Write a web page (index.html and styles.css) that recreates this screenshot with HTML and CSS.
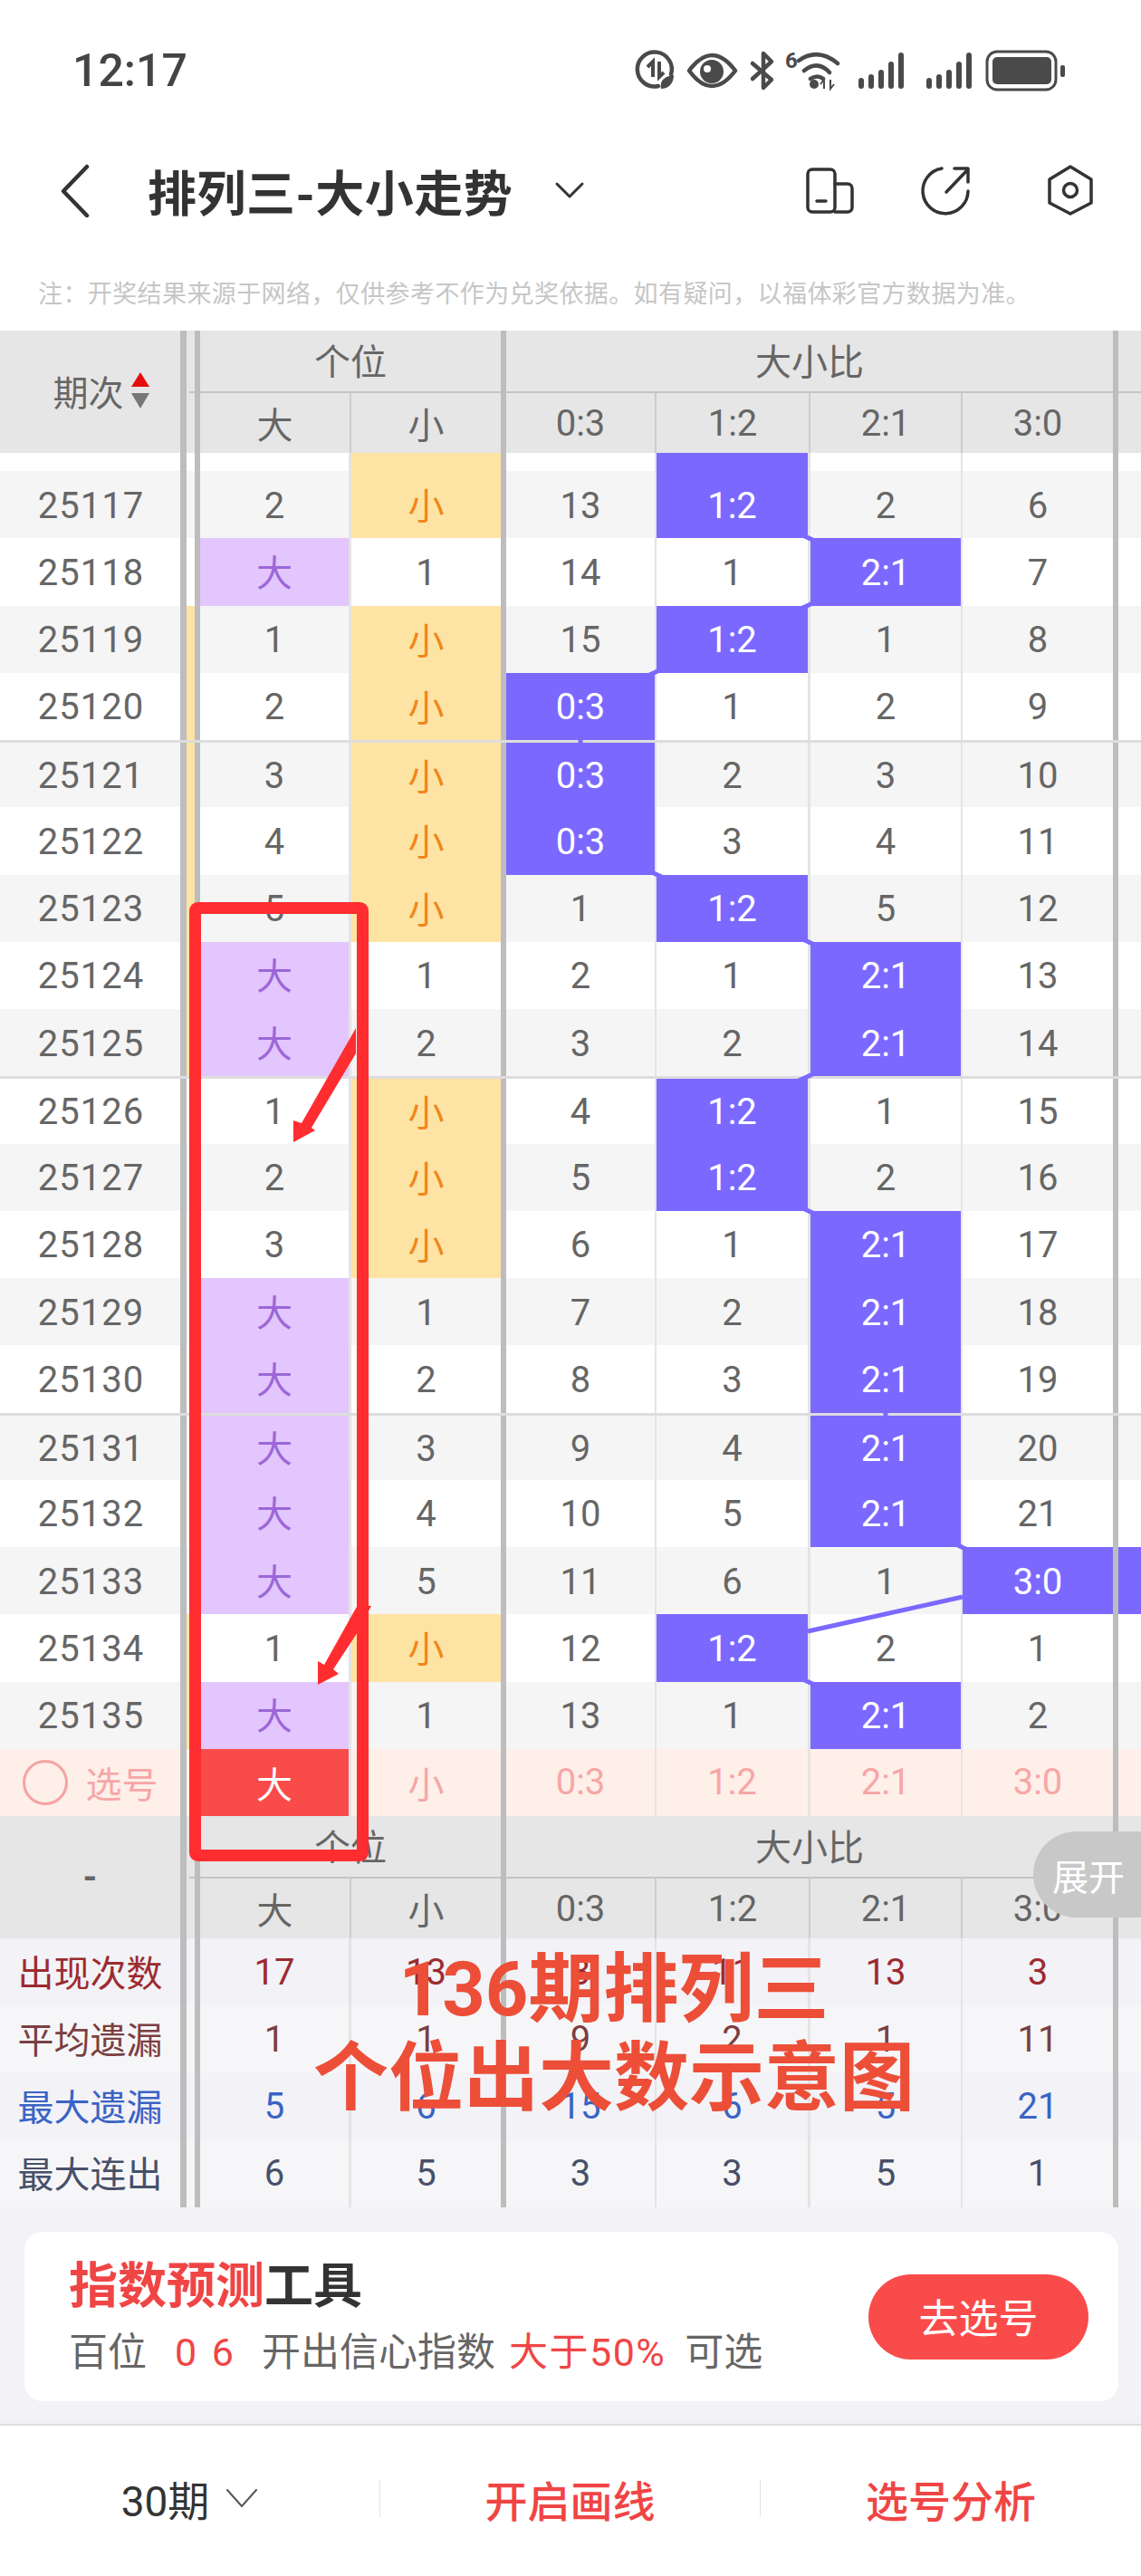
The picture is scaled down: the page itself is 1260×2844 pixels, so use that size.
FILE: index.html
```html
<!DOCTYPE html>
<html lang="zh-CN">

<head>
    <meta charset="UTF-8">
    <meta name="viewport" content="width=device-width, initial-scale=1.0">
    <title>排列三-大小走势</title>
    <link rel="stylesheet" href="styles.css">
</head>

<body>
    <!-- 状态栏 -->
    <div class="status">
        <span class="time">12:17</span>
        <svg class="status-icons" viewBox="700 50 480 56" width="480" height="56">
            <path class="line" d="M727 95 A19 19 0 1 1 741 82" />
            <path class="thin" d="M721 85 V68 L715 74 M728 68 V85 L733 80" />
            <path class="solid" d="M730 98 C728 88 735 84 744 83 C744 92 738 98 730 98 Z" />
            <path class="line" d="M761 78 C770 66 778 61 786 61 C795 61 803 66 812 78 C803 90 795 95 786 95 C778 95 770 90 761 78 Z" />
            <circle class="solid" cx="786" cy="79" r="13" />
            <circle cx="781" cy="76" r="4" fill="#fff" />
            <path class="line" d="M831 70 L852 88 L843 97 V59 L852 68 L831 87" />
            <text class="six" x="867" y="75">6</text>
            <path class="line" d="M882 67 Q903 52 925 70 M888 78 Q903 66 916 80 M895 87 Q903 82 909 87" />
            <circle class="solid" cx="899" cy="93" r="5" />
            <path class="tiny" d="M910 98 V88 L906 93 M917 88 V98 L921 93" />
            <rect class="solid" x="948" y="86" width="6" height="12" rx="3" />
            <rect class="solid" x="959" y="82" width="6" height="16" rx="3" />
            <rect class="solid" x="970" y="77" width="6" height="21" rx="3" />
            <rect class="solid" x="981" y="68" width="6" height="30" rx="3" />
            <rect class="solid" x="992" y="58" width="6" height="40" rx="3" />
            <rect class="solid" x="1023" y="86" width="6" height="12" rx="3" />
            <rect class="solid" x="1034" y="82" width="6" height="16" rx="3" />
            <rect class="solid" x="1045" y="77" width="6" height="21" rx="3" />
            <rect class="solid" x="1056" y="68" width="6" height="30" rx="3" />
            <rect class="solid" x="1067" y="58" width="6" height="40" rx="3" />
            <rect class="batt" x="1090" y="57" width="76" height="42" rx="11" />
            <rect class="solid" x="1096" y="63" width="65" height="30" rx="5" />
            <rect class="solid" x="1171" y="72" width="5" height="13" rx="2" />
        </svg>
    </div>

    <!-- 标题栏 -->
    <div class="nav">
        <svg class="back" viewBox="0 0 36 60" width="36" height="60">
            <path d="M32 4 L6 31 L32 58" />
        </svg>
        <h1 class="nav-title">排列三-大小走势</h1>
        <svg class="caret" viewBox="0 0 34 20" width="34" height="20">
            <path d="M3 3 L17 17 L31 3" />
        </svg>
        <svg class="nav-icons" viewBox="885 180 330 64" width="330" height="64">
            <rect x="892" y="189" width="30" height="47" rx="5" />
            <path d="M922 205 H936 a5 5 0 0 1 5 5 V231 a5 5 0 0 1 -5 5 H922 M902 224 H912" />
            <path d="M1040 188 A25 25 0 1 0 1069 213 M1045 214 L1068 190 M1054 188 H1069 V203" />
            <path d="M1182 186 L1205 200 V226 L1182 238 L1159 226 V200 Z" />
            <circle cx="1182" cy="212" r="7.5" />
        </svg>
    </div>

    <p class="note">注：开奖结果来源于网络，仅供参考不作为兑奖依据。如有疑问，以福体彩官方数据为准。</p>

    <!-- 表头 -->
    <div class="thead">
        <div class="th-id">期次
            <span class="sort"><i class="sort-up"></i><i class="sort-down"></i></span>
        </div>
        <div class="gap th-gap"></div>
        <div class="th-group th-ge">个位</div>
        <div class="bar th-bar-a"></div>
        <div class="th-group th-ratio">大小比</div>
        <div class="bar th-bar-b"></div>
        <div class="th-group th-rest"></div>
        <div class="th-cell line-r">大</div>
        <div class="th-cell th-second">小</div>
        <div class="th-cell th-third line-r">0:3</div>
        <div class="th-cell line-r">1:2</div>
        <div class="th-cell line-r">2:1</div>
        <div class="th-cell">3:0</div>
        <div class="th-cell th-last"></div>
    </div>

    <!-- 走势 -->
    <div class="row stub">
        <div></div><div class="gap"></div><div class="cell"></div><div class="cell small"></div><div class="bar"></div>
        <div class="cell"></div><div class="cell on"></div><div class="cell"></div><div class="cell"></div><div class="bar"></div><div></div>
    </div>
    <div class="row odd">
        <div class="cell id">25117</div><div class="gap"></div><div class="cell">2</div><div class="cell small">小</div><div class="bar"></div>
        <div class="cell">13</div><div class="cell on">1:2</div><div class="cell">2</div><div class="cell">6</div><div class="bar"></div><div></div>
    </div>
    <div class="row">
        <div class="cell id">25118</div><div class="gap"></div><div class="cell big">大</div><div class="cell">1</div><div class="bar"></div>
        <div class="cell">14</div><div class="cell">1</div><div class="cell on">2:1</div><div class="cell">7</div><div class="bar"></div><div></div>
    </div>
    <div class="row odd">
        <div class="cell id">25119</div><div class="gap hit"></div><div class="cell">1</div><div class="cell small">小</div><div class="bar"></div>
        <div class="cell">15</div><div class="cell on">1:2</div><div class="cell">1</div><div class="cell">8</div><div class="bar"></div><div></div>
    </div>
    <div class="row">
        <div class="cell id">25120</div><div class="gap hit"></div><div class="cell">2</div><div class="cell small">小</div><div class="bar"></div>
        <div class="cell on">0:3</div><div class="cell">1</div><div class="cell">2</div><div class="cell">9</div><div class="bar"></div><div></div>
    </div>
    <div class="row odd sep">
        <div class="cell id">25121</div><div class="gap hit"></div><div class="cell">3</div><div class="cell small">小</div><div class="bar"></div>
        <div class="cell on">0:3</div><div class="cell">2</div><div class="cell">3</div><div class="cell">10</div><div class="bar"></div><div></div>
    </div>
    <div class="row">
        <div class="cell id">25122</div><div class="gap hit"></div><div class="cell">4</div><div class="cell small">小</div><div class="bar"></div>
        <div class="cell on">0:3</div><div class="cell">3</div><div class="cell">4</div><div class="cell">11</div><div class="bar"></div><div></div>
    </div>
    <div class="row odd">
        <div class="cell id">25123</div><div class="gap hit"></div><div class="cell">5</div><div class="cell small">小</div><div class="bar"></div>
        <div class="cell">1</div><div class="cell on">1:2</div><div class="cell">5</div><div class="cell">12</div><div class="bar"></div><div></div>
    </div>
    <div class="row">
        <div class="cell id">25124</div><div class="gap hit"></div><div class="cell big">大</div><div class="cell">1</div><div class="bar"></div>
        <div class="cell">2</div><div class="cell">1</div><div class="cell on">2:1</div><div class="cell">13</div><div class="bar"></div><div></div>
    </div>
    <div class="row odd">
        <div class="cell id">25125</div><div class="gap hit"></div><div class="cell big">大</div><div class="cell">2</div><div class="bar"></div>
        <div class="cell">3</div><div class="cell">2</div><div class="cell on">2:1</div><div class="cell">14</div><div class="bar"></div><div></div>
    </div>
    <div class="row sep">
        <div class="cell id">25126</div><div class="gap"></div><div class="cell">1</div><div class="cell small">小</div><div class="bar"></div>
        <div class="cell">4</div><div class="cell on">1:2</div><div class="cell">1</div><div class="cell">15</div><div class="bar"></div><div></div>
    </div>
    <div class="row odd">
        <div class="cell id">25127</div><div class="gap"></div><div class="cell">2</div><div class="cell small">小</div><div class="bar"></div>
        <div class="cell">5</div><div class="cell on">1:2</div><div class="cell">2</div><div class="cell">16</div><div class="bar"></div><div></div>
    </div>
    <div class="row">
        <div class="cell id">25128</div><div class="gap"></div><div class="cell">3</div><div class="cell small">小</div><div class="bar"></div>
        <div class="cell">6</div><div class="cell">1</div><div class="cell on">2:1</div><div class="cell">17</div><div class="bar"></div><div></div>
    </div>
    <div class="row odd">
        <div class="cell id">25129</div><div class="gap"></div><div class="cell big">大</div><div class="cell">1</div><div class="bar"></div>
        <div class="cell">7</div><div class="cell">2</div><div class="cell on">2:1</div><div class="cell">18</div><div class="bar"></div><div></div>
    </div>
    <div class="row">
        <div class="cell id">25130</div><div class="gap"></div><div class="cell big">大</div><div class="cell">2</div><div class="bar"></div>
        <div class="cell">8</div><div class="cell">3</div><div class="cell on">2:1</div><div class="cell">19</div><div class="bar"></div><div></div>
    </div>
    <div class="row odd sep">
        <div class="cell id">25131</div><div class="gap"></div><div class="cell big">大</div><div class="cell">3</div><div class="bar"></div>
        <div class="cell">9</div><div class="cell">4</div><div class="cell on">2:1</div><div class="cell">20</div><div class="bar"></div><div></div>
    </div>
    <div class="row">
        <div class="cell id">25132</div><div class="gap"></div><div class="cell big">大</div><div class="cell">4</div><div class="bar"></div>
        <div class="cell">10</div><div class="cell">5</div><div class="cell on">2:1</div><div class="cell">21</div><div class="bar"></div><div></div>
    </div>
    <div class="row odd">
        <div class="cell id">25133</div><div class="gap"></div><div class="cell big">大</div><div class="cell">5</div><div class="bar"></div>
        <div class="cell">11</div><div class="cell">6</div><div class="cell">1</div><div class="cell on">3:0</div><div class="bar"></div><div class="cell on"></div>
    </div>
    <div class="row">
        <div class="cell id">25134</div><div class="gap hit"></div><div class="cell">1</div><div class="cell small">小</div><div class="bar"></div>
        <div class="cell">12</div><div class="cell on">1:2</div><div class="cell">2</div><div class="cell">1</div><div class="bar"></div><div></div>
    </div>
    <div class="row odd">
        <div class="cell id">25135</div><div class="gap hit"></div><div class="cell big">大</div><div class="cell">1</div><div class="bar"></div>
        <div class="cell">13</div><div class="cell">1</div><div class="cell on">2:1</div><div class="cell">2</div><div class="bar"></div><div></div>
    </div>
    <!-- 选号行 -->
    <div class="row pick">
        <div class="cell id"><i class="radio"></i>选号</div><div class="gap"></div><div class="cell picked">大</div><div class="cell">小</div><div class="bar"></div>
        <div class="cell">0:3</div><div class="cell">1:2</div><div class="cell">2:1</div><div class="cell">3:0</div><div class="bar"></div><div></div>
    </div>

    <!-- 底部表头 -->
    <div class="thead thead-foot">
        <div class="th-id th-dash">-</div>
        <div class="gap th-gap"></div>
        <div class="th-group th-ge">个位</div>
        <div class="bar th-bar-a"></div>
        <div class="th-group th-ratio">大小比</div>
        <div class="bar th-bar-b"></div>
        <div class="th-group th-rest"></div>
        <div class="th-cell line-r">大</div>
        <div class="th-cell th-second">小</div>
        <div class="th-cell th-third line-r">0:3</div>
        <div class="th-cell line-r">1:2</div>
        <div class="th-cell line-r">2:1</div>
        <div class="th-cell">3:0</div>
        <div class="th-cell th-last"></div>
    </div>

    <!-- 统计 -->
    <div class="row stat stat-count">
        <div class="cell id">出现次数</div><div class="gap"></div><div class="cell">17</div><div class="cell">13</div><div class="bar"></div>
        <div class="cell">3</div><div class="cell">11</div><div class="cell">13</div><div class="cell">3</div><div class="bar"></div><div></div>
    </div>
    <div class="row stat stat-avg">
        <div class="cell id">平均遗漏</div><div class="gap"></div><div class="cell">1</div><div class="cell">1</div><div class="bar"></div>
        <div class="cell">9</div><div class="cell">2</div><div class="cell">1</div><div class="cell">11</div><div class="bar"></div><div></div>
    </div>
    <div class="row stat stat-miss">
        <div class="cell id">最大遗漏</div><div class="gap"></div><div class="cell">5</div><div class="cell">6</div><div class="bar"></div>
        <div class="cell">15</div><div class="cell">6</div><div class="cell">5</div><div class="cell">21</div><div class="bar"></div><div></div>
    </div>
    <div class="row stat stat-run">
        <div class="cell id">最大连出</div><div class="gap"></div><div class="cell">6</div><div class="cell">5</div><div class="bar"></div>
        <div class="cell">3</div><div class="cell">3</div><div class="cell">5</div><div class="cell">1</div><div class="bar"></div><div></div>
    </div>

    <!-- 指数预测卡片 -->
    <div class="tool-wrap">
        <div class="tool">
            <div class="tool-text">
                <div class="tool-title"><span class="red">指数预测</span>工具</div>
                <div class="tool-sub">
                    <span>百位</span>
                    <span class="red tool-nums">0 6</span>
                    <span>开出信心指数</span>
                    <span class="red tool-more">大于50%</span>
                    <span>可选</span>
                </div>
            </div>
            <a class="tool-btn" href="javascript:;">去选号</a>
        </div>
    </div>

    <!-- 底部栏 -->
    <div class="foot">
        <div class="foot-item foot-period">30期
            <svg viewBox="0 0 36 24" width="36" height="24">
                <path d="M2 3 L18 21 L34 3" />
            </svg>
        </div>
        <div class="foot-item red">开启画线</div>
        <div class="foot-item red">选号分析</div>
    </div>

    <!-- 盖在表格上的内容 -->
    <div class="unfold">展开</div>

    <svg class="marks" viewBox="0 0 1260 2844" width="1260" height="2844">
        <g class="trend">
            <path d="M871 584 L915 604" />
            <path d="M871 678 L915 658" />
            <path d="M702 752 L746 732" />
            <path d="M702 955 L746 975" />
            <path d="M871 1030 L915 1050" />
            <path d="M871 1198 L915 1178" />
            <path d="M871 1327 L915 1347" />
            <path d="M1040 1698 L1084 1718" />
            <path d="M892 1801 L1063 1763" />
            <path d="M871 1847 L915 1867" />
            <path d="M641 812 V822" />
            <path d="M978 1555 V1565" />
        </g>
        <g class="hand">
            <rect x="215.5" y="1002.5" width="185" height="1046" rx="3" />
            <polygon points="393,1135 393,1163 344,1245 348,1248 324,1261 324,1237 333,1240" />
            <polygon points="395,1772 410,1773 393,1805 368,1843 374,1848 351,1860 351,1834 358,1838" />
        </g>
    </svg>

    <div class="caption">136期排列三<br>个位出大数示意图</div>
</body>

</html>
```

FILE: styles.css
```css
* {
    box-sizing: border-box;
}

html,
body,
h1,
p {
    margin: 0;
    padding: 0;
}

body {
    position: relative;
    width: 1260px;
    height: 2844px;
    overflow: hidden;
    background: #ffffff;
    color: #666666;
    font-family: Roboto, "Noto Sans CJK SC", sans-serif;
}

a {
    text-decoration: none;
}

.red {
    color: #f04545;
}

/* 状态栏 */
.status {
    display: flex;
    align-items: center;
    justify-content: space-between;
    height: 156px;
    padding: 0 80px;
}

.time {
    font-size: 50px;
    font-weight: 500;
    color: #444444;
}

.status-icons .line {
    fill: none;
    stroke: #4a4a4a;
    stroke-width: 4.5;
    stroke-linecap: round;
    stroke-linejoin: round;
}

.status-icons .thin {
    fill: none;
    stroke: #4a4a4a;
    stroke-width: 4;
}

.status-icons .tiny {
    fill: none;
    stroke: #4a4a4a;
    stroke-width: 2;
}

.status-icons .solid {
    fill: #4a4a4a;
}

.status-icons .batt {
    fill: none;
    stroke: #4a4a4a;
    stroke-width: 3;
}

.status-icons .six {
    fill: #4a4a4a;
    font-size: 24px;
    font-weight: 700;
}

/* 标题栏 */
.nav {
    display: flex;
    align-items: center;
    height: 108px;
    padding-left: 64px;
    color: #333333;
}

.back path,
.caret path,
.nav-icons path,
.nav-icons rect,
.nav-icons circle,
.foot-period path {
    fill: none;
    stroke: #333333;
    stroke-width: 3.5;
    stroke-linecap: round;
    stroke-linejoin: round;
}

.back path {
    stroke-width: 4.5;
}

.caret {
    margin-left: 46px;
}

.caret path {
    stroke-width: 3;
}

.nav-title {
    margin-left: 63px;
    font-size: 54px;
    font-weight: 700;
    letter-spacing: 0.5px;
}

.nav-icons {
    margin-left: auto;
    margin-right: 45px;
}

.note {
    height: 101px;
    padding: 44px 0 0 42px;
    font-size: 27px;
    letter-spacing: 0.4px;
    line-height: 34px;
    color: #c6c6c6;
}

/* 表格 */
.thead,
.row {
    display: grid;
    grid-template-columns: 199px 22px 167px 165px 6px 166px 170px 168px 166px 6px 25px;
}

.thead {
    grid-template-rows: 69px 66px;
    height: 135px;
    background: #e6e6e6;
    font-size: 40px;
}

.th-id {
    grid-column: 1;
    grid-row: 1 / 3;
    display: flex;
    align-items: center;
    justify-content: center;
    font-size: 39px;
    padding: 0 0 4px 24px;
}

.th-dash {
    padding: 0;
    font-size: 40px;
    font-weight: 700;
}

.sort {
    display: flex;
    flex-direction: column;
    gap: 7px;
    margin-left: 8px;
}

.sort i {
    display: block;
    width: 0;
    height: 0;
    border-left: 10px solid transparent;
    border-right: 10px solid transparent;
}

.sort-up {
    border-bottom: 16px solid #e60d0d;
}

.sort-down {
    border-top: 17px solid #777777;
}

.gap {
    border-left: 7px solid #bdbdbd;
    border-right: 6px solid #bdbdbd;
}

.gap.hit {
    background: #fee4a4;
}

.th-gap {
    position: relative;
    grid-column: 2;
    grid-row: 1 / 3;
}

.th-gap::after {
    content: "";
    position: absolute;
    left: 3px;
    right: 0;
    top: 67px;
    height: 2px;
    background: #c4c4c4;
}

.bar {
    background: #bdbdbd;
}

.th-group {
    display: flex;
    align-items: center;
    justify-content: center;
    padding-bottom: 3px;
    border-bottom: 2px solid #c4c4c4;
}

.th-ge {
    grid-column: 3 / 5;
    grid-row: 1;
}

.th-bar-a {
    grid-column: 5;
    grid-row: 1 / 3;
}

.th-ratio {
    grid-column: 6 / 10;
    grid-row: 1;
}

.th-bar-b {
    grid-column: 10;
    grid-row: 1 / 3;
}

.th-rest {
    grid-column: 11;
    grid-row: 1;
}

.th-cell {
    display: flex;
    align-items: center;
    justify-content: center;
    grid-row: 2;
}

.th-second {
    grid-column: 4;
}

.th-third {
    grid-column: 6;
}

.th-last {
    grid-column: 11;
}

.line-r {
    border-right: 2px solid #cccccc;
}

.row {
    height: 74.25px;
    background: #ffffff;
    font-size: 40px;
}

.row.stub {
    height: 20px;
}

.row.odd {
    background: #f5f5f5;
}

.row.sep {
    border-top: 3px solid #dddddd;
}

.cell {
    display: flex;
    align-items: center;
    justify-content: center;
    padding-top: 2px;
}

.cell.id {
    padding-left: 2px;
    letter-spacing: 1px;
}

.row > .cell:nth-child(3),
.row > .cell:nth-child(6),
.row > .cell:nth-child(7),
.row > .cell:nth-child(8) {
    border-right: 2px solid #e4e4e4;
}

.row > .cell:nth-child(3) {
    border-right-width: 3px;
}

.row > .cell:nth-child(7) {
    border-right-width: 3px;
}

.cell.small {
    padding: 0 0 2px;
    background: #fee4a4;
    color: #f0861a;
}

.cell.big {
    padding: 0 0 3px;
    background: #e2c6fd;
    color: #9b67d8;
}

.cell.on {
    background: #7b69ff;
    color: #ffffff;
}

.row.pick {
    background: #feefe9;
    color: #f7a6a6;
}

.row.pick .cell {
    padding: 0;
}

.row.pick .id {
    letter-spacing: 0;
}

.cell.picked {
    background: #fa4b4b;
    color: #ffffff;
}

.radio {
    display: block;
    width: 50px;
    height: 50px;
    margin-right: 20px;
    border: 3px solid #f5a3a3;
    border-radius: 50%;
}

.stat {
    background: #f2f2f7;
}

.stat .cell {
    padding: 0;
}

.stat .cell.id {
    padding-bottom: 3px;
    letter-spacing: 0;
}

.stat-avg,
.stat-run {
    background: #f6f6f8;
}

.stat-count {
    color: #9c2b2f;
}

.stat-avg {
    color: #7a3f42;
}

.stat-miss {
    color: #3b63c4;
}

.stat-run {
    color: #475069;
}

/* 指数预测卡片 */
.tool-wrap {
    height: 241px;
    padding: 27px 25px 0 27px;
    background: #f2f2f7;
    border-bottom: 2px solid #dddddd;
}

.tool {
    display: flex;
    align-items: center;
    justify-content: space-between;
    height: 187px;
    padding: 0 33px 0 49px;
    background: #ffffff;
    border-radius: 20px;
}

.tool-title {
    font-size: 54px;
    font-weight: 700;
    line-height: 70px;
    color: #333333;
}

.tool-sub {
    display: flex;
    gap: 15px;
    margin-top: 9px;
    font-size: 43px;
    line-height: 56px;
}

.tool-nums {
    margin: 0 16px;
    word-spacing: 6px;
}

.tool-more {
    margin: 0 6px 0 0;
    letter-spacing: 1.5px;
}

.tool-btn {
    display: flex;
    align-items: center;
    justify-content: center;
    width: 243px;
    height: 94px;
    padding-bottom: 2px;
    border-radius: 47px;
    background: #fa4b4b;
    font-size: 44px;
    color: #ffffff;
}

/* 底部栏 */
.foot {
    display: flex;
    align-items: center;
    height: 165px;
    padding-bottom: 5px;
}

.foot-item {
    display: flex;
    align-items: center;
    justify-content: center;
    width: 421px;
    height: 41px;
    border-right: 1px solid #e2e2e2;
    font-size: 47px;
    font-weight: 500;
}

.foot-item:last-child {
    border-right: 0;
}

.foot-period {
    color: #333333;
    font-weight: 400;
    font-size: 46px;
}

.foot-period svg {
    margin-left: 18px;
}

.foot-period path {
    stroke-width: 2;
    stroke: #555555;
}

/* 覆盖层 */
.unfold {
    position: absolute;
    top: 2022px;
    right: 0;
    display: flex;
    align-items: center;
    width: 119px;
    height: 95px;
    padding-left: 21px;
    border-radius: 48px 0 0 48px;
    background: #c8c8c8;
    font-size: 40px;
    color: #ffffff;
    white-space: nowrap;
}

.marks {
    position: absolute;
    top: 0;
    left: 0;
}

.trend path {
    fill: none;
    stroke: #7b69ff;
    stroke-width: 5;
}

.hand rect {
    fill: none;
    stroke: #ff2d30;
    stroke-width: 13;
}

.hand polygon {
    fill: #ff2d30;
}

.caption {
    position: absolute;
    top: 2148px;
    left: 338px;
    width: 680px;
    font-size: 83px;
    font-weight: 700;
    line-height: 98px;
    text-align: center;
    color: #ec4e38;
}
```
